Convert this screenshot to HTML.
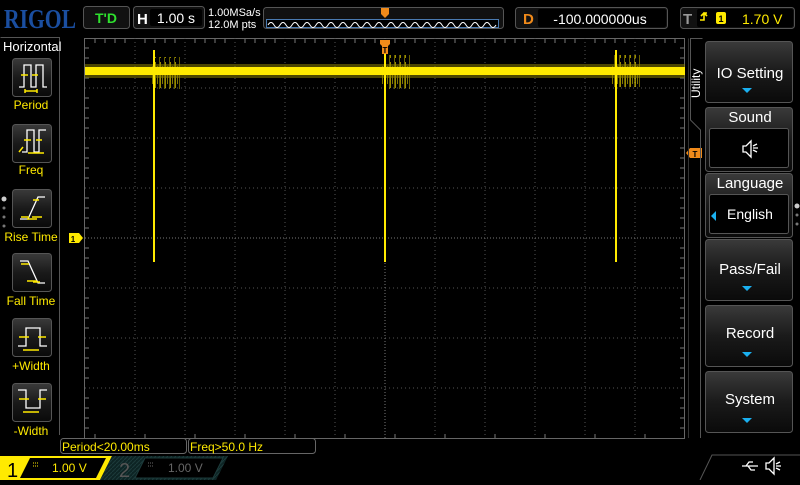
<!DOCTYPE html>
<html><head><meta charset="utf-8"><style>
body{margin:0;background:#000;width:800px;height:480px;overflow:hidden;font-family:"Liberation Sans",sans-serif}
</style></head><body>
<svg width="800" height="480" xmlns="http://www.w3.org/2000/svg" font-family="Liberation Sans, sans-serif">
<defs>
<linearGradient id="bg" x1="0" y1="0" x2="0" y2="1"><stop offset="0" stop-color="#3a3a3a"/><stop offset="0.5" stop-color="#1a1a1a"/><stop offset="1" stop-color="#0a0a0a"/></linearGradient>
<pattern id="hatch" width="4" height="4" patternUnits="userSpaceOnUse"><rect width="4" height="4" fill="#0d2424"/><path d="M0 4L4 0" stroke="#1c3a3a" stroke-width="1"/></pattern>
<pattern id="noise" width="5" height="30" patternUnits="userSpaceOnUse"><rect x="0" y="2" width="1" height="26" fill="#ffea00" opacity="0.6"/><rect x="2" y="6" width="1" height="18" fill="#ffea00" opacity="0.5"/><rect x="4" y="0" width="1" height="30" fill="#ffea00" opacity="0.4"/></pattern>
</defs>
<rect width="800" height="480" fill="#000"/>
<!-- top bar -->
<text x="4" y="28" font-family="Liberation Serif, serif" font-weight="bold" font-size="27" fill="#1a4ea0" textLength="72" lengthAdjust="spacingAndGlyphs">RIGOL</text>
<rect x="83.5" y="6.5" width="46" height="22" rx="3" fill="#111" stroke="#555"/>
<text x="106" y="23" font-size="14" font-weight="bold" fill="#2ee02e" text-anchor="middle">T'D</text>
<rect x="133.5" y="6.5" width="71" height="22" rx="3" fill="#111" stroke="#555"/>
<text x="137" y="24" font-size="15" font-weight="bold" fill="#fff">H</text>
<rect x="150" y="9" width="52" height="17" rx="2" fill="#000"/>
<text x="176" y="23" font-size="14" fill="#fff" text-anchor="middle">1.00 s</text>
<text x="208" y="16" font-size="11" fill="#fff">1.00MSa/s</text>
<text x="208" y="28" font-size="11" fill="#fff">12.0M pts</text>
<rect x="263.5" y="7.5" width="240" height="21" rx="3" fill="#111" stroke="#555"/>
<rect x="266.5" y="19.5" width="232" height="8" fill="#000" stroke="#4a7ab0"/>
<path d="M268 25 q3 -5 6 0 t6 0 t6 0 t6 0 t6 0 t6 0 t6 0 t6 0 t6 0 t6 0 t6 0 t6 0 t6 0 t6 0 t6 0 t6 0 t6 0 t6 0 t6 0 t6 0 t6 0 t6 0 t6 0 t6 0 t6 0 t6 0 t6 0 t6 0 t6 0 t6 0 t6 0 t6 0 t6 0 t6 0 t6 0 t6 0 t6 0 t6 0" fill="none" stroke="#fff" stroke-width="1"/>
<path d="M381 8h8v6l-4 4l-4-4z" fill="#f08a1a"/>
<rect x="515.5" y="7.5" width="152" height="21" rx="3" fill="#111" stroke="#555"/>
<rect x="538" y="9" width="128" height="18" rx="2" fill="#000"/>
<text x="523" y="24" font-size="15" font-weight="bold" fill="#f08a1a">D</text>
<text x="600" y="24" font-size="14" fill="#fff" text-anchor="middle">-100.000000us</text>
<rect x="680.5" y="7.5" width="114" height="21" rx="3" fill="#111" stroke="#555"/>
<rect x="697" y="9" width="96" height="18" rx="2" fill="#000"/>
<text x="683" y="24" font-size="15" font-weight="bold" fill="#999">T</text>
<path d="M700 20h4v-7h3M701 16l3-3 3 3" stroke="#ffea00" stroke-width="1.6" fill="none"/>
<rect x="716" y="12" width="10" height="12" rx="2" fill="#ffea00"/>
<text x="721" y="22" font-size="9" font-weight="bold" fill="#000" text-anchor="middle">1</text>
<text x="742" y="24" font-size="14" fill="#ffea00">1.70 V</text>
<!-- left panel -->
<path d="M0.5 37.5H59.5V435" fill="none" stroke="#555"/>
<text x="3" y="51" font-size="13" fill="#fff">Horizontal</text>
<g font-size="12" fill="#ffea00" text-anchor="middle">
<text x="31" y="109">Period</text><text x="31" y="174">Freq</text><text x="31" y="241">Rise Time</text>
<text x="31" y="305">Fall Time</text><text x="31" y="370">+Width</text><text x="31" y="435">-Width</text>
</g>
<g stroke="#555" fill="url(#bg)">
<rect x="12.5" y="58.5" width="39" height="38" rx="3"/><rect x="12.5" y="124.5" width="39" height="38" rx="3"/>
<rect x="12.5" y="189.5" width="39" height="38" rx="3"/><rect x="12.5" y="253.5" width="39" height="38" rx="3"/>
<rect x="12.5" y="318.5" width="39" height="38" rx="3"/><rect x="12.5" y="383.5" width="39" height="38" rx="3"/>
</g>
<g fill="none" stroke="#fff" stroke-width="1.3">
<path d="M19 87h5v-22h7v22h5v-22h7v22h4"/>
<path d="M22 152h5v-22h7v22h5v-22h7"/>
<path d="M20 219h8l10-22h7"/>
<path d="M20 261h8l10 22h7"/>
<path d="M18 346h8v-18h14v18h7"/>
<path d="M18 390h8v18h14v-18h7"/>
</g>
<g fill="none" stroke="#ffea00" stroke-width="1.5">
<path d="M21 75h7M32 75h6M25 91h12M25 89v4M37 89v4"/>
<path d="M24 140h7M36 140h6M28 153h16M19 152l4-5"/>
<path d="M33 200h6M21 217h8M32 217h10M27 219h10"/>
<path d="M21 264h8M33 282h7M27 281h10"/>
<path d="M19 337h10M38 337h8M23 350h16"/>
<path d="M19 399h10M38 399h8M23 412h16"/>
</g>
<circle cx="4" cy="199" r="2.5" fill="#ccc"/><circle cx="4" cy="208" r="1.5" fill="#777"/><circle cx="4" cy="217" r="1.5" fill="#777"/><circle cx="4" cy="226" r="1.5" fill="#777"/>
<!-- grid -->
<rect x="84.5" y="38.5" width="600" height="400" fill="none" stroke="#666"/>
<g stroke="#555" stroke-dasharray="1 3">
<path d="M135 38v400M185 38v400M235 38v400M285 38v400M335 38v400M435 38v400M485 38v400M535 38v400M585 38v400M635 38v400"/>
<path d="M85 88h600M85 138h600M85 188h600M85 288h600M85 338h600M85 388h600"/>
<path d="M85 238h600M385 38v400" stroke="#777" stroke-dasharray="1 2"/>
</g>
<g stroke="#777">
<path d="M85 38.5h600" stroke-dasharray="1 9" stroke-width="8" transform="translate(0,0)" opacity="0"/>
<path d="M95 39v4M105 39v4M115 39v4M125 39v4M145 39v4M155 39v4M165 39v4M175 39v4M195 39v4M205 39v4M215 39v4M225 39v4M245 39v4M255 39v4M265 39v4M275 39v4M295 39v4M305 39v4M315 39v4M325 39v4M345 39v4M355 39v4M365 39v4M375 39v4M395 39v4M405 39v4M415 39v4M425 39v4M445 39v4M455 39v4M465 39v4M475 39v4M495 39v4M505 39v4M515 39v4M525 39v4M545 39v4M555 39v4M565 39v4M575 39v4M595 39v4M605 39v4M615 39v4M625 39v4M645 39v4M655 39v4M665 39v4M675 39v4"/>
<path d="M95 434v4M145 434v4M195 434v4M245 434v4M295 434v4M345 434v4M395 434v4M445 434v4M495 434v4M545 434v4M595 434v4M645 434v4" transform="translate(0,0)"/>
<path d="M85 48h4M85 58h4M85 68h4M85 78h4M85 98h4M85 108h4M85 118h4M85 128h4M85 148h4M85 158h4M85 168h4M85 178h4M85 198h4M85 208h4M85 218h4M85 228h4M85 248h4M85 258h4M85 268h4M85 278h4M85 298h4M85 308h4M85 318h4M85 328h4M85 348h4M85 358h4M85 368h4M85 378h4M85 398h4M85 408h4M85 418h4M85 428h4"/>
<path d="M680 48h4M680 58h4M680 68h4M680 78h4M680 98h4M680 108h4M680 118h4M680 128h4M680 148h4M680 158h4M680 168h4M680 178h4M680 198h4M680 208h4M680 218h4M680 228h4M680 248h4M680 258h4M680 268h4M680 278h4M680 298h4M680 308h4M680 318h4M680 328h4M680 348h4M680 358h4M680 368h4M680 378h4M680 398h4M680 408h4M680 418h4M680 428h4"/>
</g>
<!-- trace -->
<rect x="152" y="57" width="28" height="32" fill="url(#noise)"/>
<rect x="382" y="55" width="28" height="34" fill="url(#noise)"/>
<rect x="612" y="55" width="28" height="32" fill="url(#noise)"/>
<rect x="85" y="64" width="600" height="14" fill="#8a8000" opacity="0.55"/>
<rect x="85" y="67" width="600" height="8" fill="#ffea00"/>
<g stroke="#ffea00" stroke-width="2">
<path d="M154 50V262M385 50V262M616 50V262"/>
</g>
<!-- markers -->
<path d="M380 40h10v4l-2 2v8h-6v-8l-2-2z" fill="#f08a1a"/><text x="385" y="53" font-size="8" font-weight="bold" fill="#000" text-anchor="middle">T</text>
<path d="M69 233h10l4 5l-4 5h-10z" fill="#ffea00"/><text x="73" y="242" font-size="8" font-weight="bold" fill="#000" text-anchor="middle">1</text>
<path d="M702 148h-12l-4 5l4 5h12z" fill="#f08a1a"/><text x="695" y="157" font-size="8" font-weight="bold" fill="#000" text-anchor="middle">T</text>
<!-- measurement -->
<rect x="60.5" y="438.5" width="126" height="15" rx="3" fill="#000" stroke="#666"/>
<rect x="188.5" y="438.5" width="127" height="15" rx="3" fill="#000" stroke="#666"/>
<text x="62" y="451" font-size="12" fill="#ffea00">Period&lt;20.00ms</text>
<text x="190" y="451" font-size="12" fill="#ffea00">Freq&gt;50.0 Hz</text>
<!-- channel bar -->
<path d="M0 456h112l-12 24h-100z" fill="#ffea00"/>
<path d="M30 458h76l-10 20h-76z" fill="#000"/>
<text x="7" y="477" font-size="20" fill="#000">1</text>
<text x="52" y="472" font-size="12" fill="#ffea00">1.00 V</text>
<path d="M33 463h6M33 466h6" stroke="#ffea00" stroke-width="1" stroke-dasharray="1 1"/>
<path d="M112 456h116l-12 24h-116z" fill="url(#hatch)"/>
<path d="M145 458h78l-10 20h-78z" fill="#000" stroke="#1c3a3a"/>
<text x="119" y="477" font-size="20" fill="#555">2</text>
<text x="168" y="472" font-size="12" fill="#666">1.00 V</text>
<path d="M148 463h6M148 466h6" stroke="#666" stroke-width="1" stroke-dasharray="1 1"/>
<path d="M700 480l12-25h88" fill="none" stroke="#555"/>
<g stroke="#fff" fill="none" stroke-width="1.3"><path d="M742 466h16M746 466l3-4h4M748 466l3 4h4"/><path d="M766 463h3l5-5v16l-5-5h-3z"/><path d="M776 464l4-2M776 466h5M776 468l4 2"/></g>
<!-- right menu -->
<path d="M702.5 38.5h-12V120l10 10V438" fill="none" stroke="#555"/>
<path d="M688.5 38.5V438" stroke="#333"/>
<text transform="translate(700,98) rotate(-90)" font-size="12" fill="#fff">Utility</text>
<g stroke="#555" fill="url(#bg)">
<rect x="705.5" y="41.5" width="87" height="61" rx="3"/>
<rect x="705.5" y="107.5" width="87" height="64" rx="3"/>
<rect x="705.5" y="173.5" width="87" height="64" rx="3"/>
<rect x="705.5" y="239.5" width="87" height="61" rx="3"/>
<rect x="705.5" y="305.5" width="87" height="61" rx="3"/>
<rect x="705.5" y="371.5" width="87" height="61" rx="3"/>
</g>
<rect x="709.5" y="128.5" width="79" height="39" rx="2" fill="#000" stroke="#555"/>
<rect x="709.5" y="194.5" width="79" height="39" rx="2" fill="#000" stroke="#555"/>
<g font-size="15" fill="#fff" text-anchor="middle">
<text x="750" y="78">IO Setting</text><text x="750" y="122">Sound</text><text x="750" y="188">Language</text>
<text x="750" y="274">Pass/Fail</text><text x="750" y="338">Record</text><text x="750" y="404">System</text>
</g>
<text x="750" y="219" font-size="14" fill="#fff" text-anchor="middle">English</text>
<g fill="#1ab0f0"><path d="M742 88h10l-5 5z"/><path d="M742 286h10l-5 5z"/><path d="M742 352h10l-5 5z"/><path d="M742 418h10l-5 5z"/><path d="M716 211v10l-5-5z"/></g>
<g stroke="#fff" fill="none" stroke-width="1.3"><path d="M743 146h3l5-5v16l-5-5h-3z"/><path d="M753 146l4-2M753 148h5M753 150l4 2"/></g>
<circle cx="797" cy="206" r="2.5" fill="#ccc"/><circle cx="797" cy="215" r="1.5" fill="#777"/><circle cx="797" cy="224" r="1.5" fill="#777"/>
</svg>
</body></html>
